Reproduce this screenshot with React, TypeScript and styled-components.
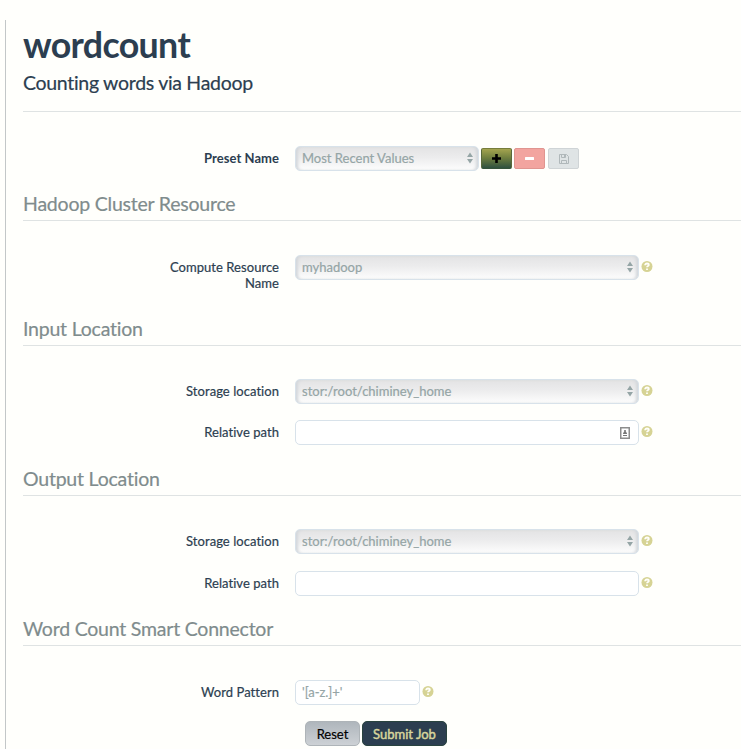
import React from 'react';
import styled, { createGlobalStyle, css } from 'styled-components';

const GlobalStyle = createGlobalStyle`
  * { box-sizing: border-box; }
  html, body { margin: 0; background: #fffffc; overflow: hidden; }
  body, input, button { font-family: Lato, "Liberation Sans", sans-serif; font-variant-ligatures: none; }
`;

const Page = styled.main`
  height: 729px;
  margin: 20px 0 0 5px;
  padding-left: 17px;
  border-left: 1px solid #c3c7c8;
  color: #2c3e50;
`;

const Header = styled.header`
  height: 92px;
  border-bottom: 1px solid #dfe3e3;
`;

const Title = styled.h1`
  margin: 0;
  padding-top: 4px;
  font-size: 35.75px;
  line-height: 42px;
  font-weight: 700;
  letter-spacing: -0.65px;
`;

const Subtitle = styled.p`
  margin: 0;
  padding-top: 5px;
  font-size: 19.5px;
  line-height: 24px;
  letter-spacing: -0.3px;
  -webkit-text-stroke: 0.2px currentColor;
`;

const Legend = styled.h2`
  height: 40px;
  margin: 0;
  padding-top: 11px;
  border-bottom: 1px solid #dfe3e3;
  color: #7f8c8d;
  font-size: 19.5px;
  line-height: 24px;
  font-weight: 400;
  letter-spacing: -0.22px;
  -webkit-text-stroke: 0.2px currentColor;
`;

const Section = styled.section<{ $gap: number; $height: number }>`
  height: ${p => p.$height}px;
  ${Legend} { margin-bottom: ${p => p.$gap}px; }
`;

const Row = styled.div<{ $next?: number }>`
  display: flex;
  align-items: flex-start;
  height: 25px;
  margin-bottom: ${p => p.$next ?? 0}px;
`;

const PresetRow = styled(Row)`
  margin: 34px 0 10px;
`;

const Label = styled.label<{ $bold?: boolean }>`
  width: 140px;
  margin: 4px 16px 0 116px;
  flex: none;
  text-align: right;
  font-size: 13px;
  line-height: 16px;
  font-weight: ${p => (p.$bold ? 700 : 400)};
  letter-spacing: 0.05px;
  -webkit-text-stroke: ${p => (p.$bold ? 0 : '0.2px')} currentColor;
`;

const field = css`
  display: flex;
  flex: none;
  align-items: center;
  justify-content: space-between;
  height: 25px;
  border: 1px solid #d8e2ea;
  border-radius: 5px;
  color: #95a5a6;
  font-size: 13px;
  line-height: 16px;
`;

const SelectBox = styled.div<{ $width: number }>`
  ${field}
  width: ${p => p.$width}px;
  padding: 0 5px 1px 6px;
  background: linear-gradient(#e3e3e4, #ececed 45%, #fdfdfd);
  box-shadow: inset 3px 0 3px -1px #d3d7db, inset -3px 0 3px -1px #d3d7db;
  -webkit-text-stroke: 0.2px currentColor;
`;

const TextBox = styled.div<{ $width: number }>`
  ${field}
  width: ${p => p.$width}px;
  padding: 0 8px 1px 6px;
  background: #fff;
  -webkit-text-stroke: 0.2px currentColor;
`;

const Icon = styled.svg`
  display: block;
  flex: none;
`;

const HelpIcon = styled(Icon)`
  margin: 6px 0 0 2px;
`;

const ContactIcon = styled(Icon)`
  margin-top: 2px;
`;

const tones = {
  add: css`background: linear-gradient(#a4a44f, #71803f 45%, #2f5140); border-color: #777d3c #59683b #35533b;`,
  remove: css`background: #f2a49f; border-color: #e09590;`,
  save: css`background: #dfe4e5; border-color: #cfd4d6;`,
};

const ToolButton = styled.button<{ $tone: keyof typeof tones }>`
  display: grid;
  place-items: center;
  width: 31px;
  height: 21px;
  margin: 2px 0 0 2px;
  padding: 0;
  border: 1px solid;
  border-radius: 2px;
  ${p => tones[p.$tone]}
  & + & { margin-left: 2px; }
  & + & + & { margin-left: 3px; }
`;

const Actions = styled.div`
  display: flex;
  gap: 2px;
  margin: 16px 0 0 282px;
`;

const ActionButton = styled.button<{ $primary?: boolean }>`
  width: ${p => (p.$primary ? 85 : 55)}px;
  height: 25px;
  padding: 0;
  border: 1px solid ${p => (p.$primary ? '#29433f' : '#aeb4b8')};
  border-radius: 5px;
  background: ${p => (p.$primary ? '#2c3e50' : 'linear-gradient(#afb6bc, #cdd1d5)')};
  color: ${p => (p.$primary ? '#d8d59c' : '#000')};
  font-size: 13px;
  line-height: 16px;
  -webkit-text-stroke: ${p => (p.$primary ? '0.45px' : '0.2px')} currentColor;
`;

function Help() {
  return (
    <HelpIcon width="12" height="11" viewBox="0 0 12 11" aria-label="Help">
      <circle cx="6" cy="5.5" r="5.5" fill="#d6d394" />
      <path d="M4.1 4.3C4.1 2.9 4.9 2.5 6 2.5c1.1 0 1.8.6 1.8 1.4 0 1.2-1.7 1.2-1.8 2.4M6 7.4v1.5" fill="none" stroke="#fffffa" strokeWidth="1.8" />
    </HelpIcon>
  );
}

function Select({ value, width = 344 }: { value: string; width?: number }) {
  return (
    <SelectBox $width={width} role="combobox">
      <span>{value}</span>
      <Icon width="6" height="12" viewBox="0 0 6 12">
        <path d="M0 5 3 .4 6 5ZM0 7h6L3 11.6Z" fill="#95a5a6" />
      </Icon>
    </SelectBox>
  );
}

function Contact() {
  return (
    <ContactIcon width="10" height="12" viewBox="0 0 10 12">
      <rect x=".75" y=".75" width="8.5" height="10.5" fill="#fff" stroke="#8d8d8d" strokeWidth="1.5" />
      <circle cx="5" cy="4.1" r="1.1" fill="#777" />
      <path d="M3 7c0-1.7 1-2 2-2s2 .3 2 2ZM3 8h4v1H3Z" fill="#777" />
    </ContactIcon>
  );
}

function StorageFields({ gap, contact }: { gap: number; contact?: boolean }) {
  return (
    <>
      <Row $next={gap}>
        <Label>Storage location</Label>
        <Select value="stor:/root/chiminey_home" />
        <Help />
      </Row>
      <Row>
        <Label>Relative path</Label>
        <TextBox $width={344}><span />{contact && <Contact />}</TextBox>
        <Help />
      </Row>
    </>
  );
}

export default function App() {
  return (
    <>
      <GlobalStyle />
      <Page>
        <Header>
          <Title>wordcount</Title>
          <Subtitle>Counting words via Hadoop</Subtitle>
        </Header>
        <PresetRow>
          <Label $bold>Preset Name</Label>
          <Select value="Most Recent Values" width={184} />
          <ToolButton $tone="add" aria-label="Add preset">
            <Icon width="9" height="9" viewBox="0 0 9 9"><path d="M3.2 0h2.6v3.2H9v2.6H5.8V9H3.2V5.8H0V3.2h3.2Z" fill="#000" /></Icon>
          </ToolButton>
          <ToolButton $tone="remove" aria-label="Remove preset">
            <Icon width="9" height="9" viewBox="0 0 9 9"><rect y="3" width="9" height="3" rx=".5" fill="#fff" /></Icon>
          </ToolButton>
          <ToolButton $tone="save" aria-label="Save preset">
            <Icon width="10" height="10" viewBox="0 0 10 10">
              <path d="M.5.5h7l2 2v7h-9ZM2.5.5v3h4v-3M2.5 9.5v-3h5v3" fill="none" stroke="#b0b8ba" />
              <path d="M5 1h1.5v2H5Z" fill="#b0b8ba" />
            </Icon>
          </ToolButton>
        </PresetRow>
        <Section $gap={34} $height={125}>
          <Legend>Hadoop Cluster Resource</Legend>
          <Row>
            <Label>Compute Resource Name</Label>
            <Select value="myhadoop" />
            <Help />
          </Row>
        </Section>
        <Section $gap={33} $height={150}>
          <Legend>Input Location</Legend>
          <StorageFields gap={16} contact />
        </Section>
        <Section $gap={33} $height={150}>
          <Legend>Output Location</Legend>
          <StorageFields gap={17} />
        </Section>
        <Section $gap={34} $height={143}>
          <Legend>Word Count Smart Connector</Legend>
          <Row>
            <Label>Word Pattern</Label>
            <TextBox $width={125}>'[a-z.]+'</TextBox>
            <Help />
          </Row>
          <Actions>
            <ActionButton>Reset</ActionButton>
            <ActionButton $primary>Submit Job</ActionButton>
          </Actions>
        </Section>
      </Page>
    </>
  );
}
